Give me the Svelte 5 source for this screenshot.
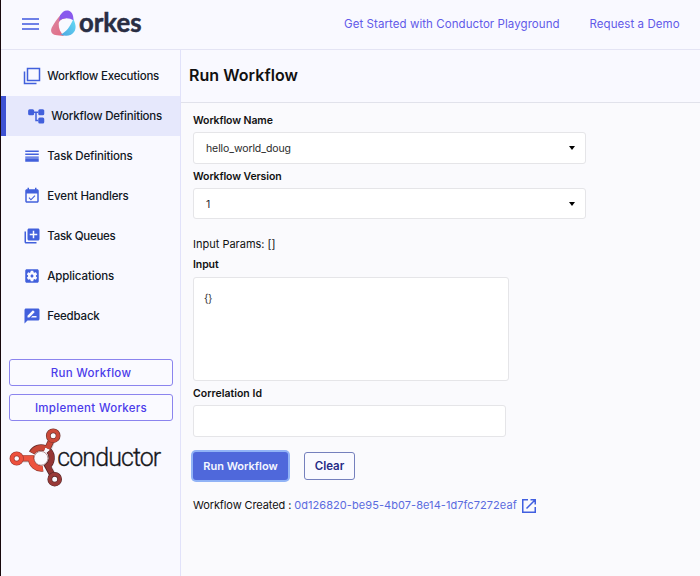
<script>
  const nav = [
    { icon: 'copy', label: 'Workflow Executions', width: 112 },
    { icon: 'tree', label: 'Workflow Definitions', active: true, width: 111 },
    { icon: 'rows', label: 'Task Definitions', width: 85.5 },
    { icon: 'event', label: 'Event Handlers', width: 81.5 },
    { icon: 'queue', label: 'Task Queues', width: 68.5 },
    { icon: 'apps', label: 'Applications', width: 67 },
    { icon: 'feedback', label: 'Feedback', width: 52.5 }
  ];
  const paths = {
    rows: 'M3 4.700h18v2H3zM3 8.700h18v2H3zM3 12.500h18v1.700H3zM3 15h18v4.500H3z',
    event: 'M16.53 12.06L15.47 11l-4.88 4.88-2.12-2.12-1.06 1.06L10.59 18l5.94-5.94zM19 3h-1V1h-2v2H8V1H6v2H5c-1.11 0-2 .9-2 2v14c0 1.1.89 2 2 2h14c1.1 0 2-.9 2-2V5c0-1.1-.9-2-2-2zm0 16H5V8.500h14v10.500z',
    queue: 'M4 6H2v14c0 1.1.9 2 2 2h14v-2H4V6zm16-4H8c-1.1 0-2 .9-2 2v12c0 1.1.9 2 2 2h12c1.1 0 2-.9 2-2V4c0-1.1-.9-2-2-2zm-1 9h-4v4h-2v-4H9V9h4V5h2v4h4v2z',
    apps: 'M12 10c-1.1 0-2 .9-2 2s.9 2 2 2 2-.9 2-2-.9-2-2-2zm7-7H5c-1.11 0-2 .9-2 2v14c0 1.1.89 2 2 2h14c1.11 0 2-.9 2-2V5c0-1.1-.89-2-2-2zm-1.75 9c0 .23-.02.46-.05.68l1.48 1.16c.13.11.17.3.08.45l-1.4 2.42c-.09.15-.27.21-.43.15l-1.74-.7c-.36.28-.76.51-1.18.69l-.26 1.85c-.03.17-.18.3-.35.3h-2.8c-.17 0-.32-.13-.35-.29l-.26-1.85c-.43-.18-.82-.41-1.18-.69l-1.74.7c-.16.06-.34 0-.43-.15l-1.4-2.42c-.09-.15-.05-.34.08-.45l1.48-1.16c-.03-.23-.05-.46-.05-.69 0-.23.02-.46.05-.68l-1.48-1.16c-.13-.11-.17-.3-.08-.45l1.4-2.42c.09-.15.27-.21.43-.15l1.74.7c.36-.28.76-.51 1.18-.69l.26-1.85c.03-.17.18-.3.35-.3h2.8c.17 0 .32.13.35.29l.26 1.85c.43.18.82.41 1.18.69l1.74-.7c.16-.06.34 0 .43.15l1.4 2.42c.09.15.05.34-.08.45l-1.48 1.16c.03.23.05.46.05.69z',
    feedback: 'M20 2H4c-1.1 0-1.99.9-1.99 2L2 22l4-4h14c1.1 0 2-.9 2-2V4c0-1.1-.9-2-2-2zM6 14v-2.47l6.88-6.88c.2-.2.51-.2.71 0l1.77 1.77c.2.2.2.51 0 .71L8.47 14H6zm12 0h-7.5l2-2H18v2z'
  };
  let version = $state('1');
  let params = $state('{}');
  let correlation = $state('');
</script>

<div class="page">
  <header>
    <svg class="menu" width="17" height="12" viewBox="0 0 17 12"><path d="M0 1h17M0 6h17M0 11h17" /></svg>
    <svg class="brand" width="98" height="42" viewBox="0 -5 98 42">
      <defs>
        <linearGradient id="pink" x1="0" y1="0" x2="1" y2="1"><stop offset="0" stop-color="#d989a6" /><stop offset="1" stop-color="#e5687e" /></linearGradient>
        <linearGradient id="cyan" x1="1" y1="0" x2="0" y2="1"><stop offset="0" stop-color="#65dcf5" /><stop offset="1" stop-color="#4ba5e0" /></linearGradient>
      </defs>
      <path d="M10 7.500C6.500 11 3 16.500 .8 20.500C-1.500 25.500 2 28 6 28.300L13 29C9.500 25.500 7.500 21.500 7.700 17C8 13 12 11.500 15 11.300Z" fill="url(#pink)" />
      <path d="M9 8.500C11.500 4.500 14.500 2.500 18.500 4C22 5.500 22.300 10 22.700 13.500C18 10.500 12 10.500 8 14Z" fill="#8959ed" />
      <path d="M22.400 12C24.500 17 25.500 20 23.700 24C20.500 29 15 30 9.500 27.500C15.500 25 19 19.500 22.400 12Z" fill="url(#cyan)" />
      <text x="28" y="24.500" textLength="62.500" lengthAdjust="spacingAndGlyphs">orkes</text>
    </svg>
    <nav class="top-links">
      <a href="#playground" class="playground">Get Started with Conductor Playground</a>
      <a href="#demo" class="demo">Request a Demo</a>
    </nav>
  </header>

  <div class="body">
    <aside>
      <ul>
        {#each nav as item}
          <li class:active={item.active}>
            <svg class="icon" width="18" height="18" viewBox="0 0 24 24">
              {#if item.icon === 'copy'}
                <path class="outline" d="M6 2h16v16H6zM2 6v16h16" />
              {:else if item.icon === 'tree'}
                <path class="outline" d="M9 7h6M12 7v11h3" />
                <rect x="1.500" y="3" width="8" height="8" rx="2" /><rect x="15" y="3" width="8" height="8" rx="2" /><rect x="15" y="14" width="8" height="8" rx="2" />
              {:else}
                <path d={paths[item.icon]} />
              {/if}
            </svg>
            <svg class="nav-text" width={item.width + 2} height="20"><text x="0.300" y="14" textLength={item.width}>{item.label}</text></svg>
          </li>
        {/each}
      </ul>
      <div class="side-actions">
        <button class="side-run">Run Workflow</button>
        <button>Implement Workers</button>
      </div>
      <svg class="conductor" width="166" height="64" viewBox="8 426 166 64">
        <path class="shadow" d="M17 458.500H32M53 435.500L48 448M55 479.500L48 466" />
        <g stroke="#6d2f2b">
          <path d="M31.800 453A10.500 10.500 0 0 1 45 448.300" stroke-width="6.400" />
          <path d="M53 437L47.500 448.500" stroke-width="6.400" />
        </g>
        <path d="M32.200 452.800A10.500 10.500 0 0 1 45 448.300M53 437L47.500 448.500" stroke="#c94737" stroke-width="5.200" />
        <path d="M49 450.800A10.500 10.500 0 0 1 47.500 466.200L54 478" stroke="#4e2426" stroke-width="6.200" />
        <path d="M49.300 451.200A10.500 10.500 0 0 1 47.800 466L54 478" stroke="#943634" stroke-width="5" />
        <path d="M18 458.300H31A10.300 10.300 0 0 0 43 468.500" stroke="#963a2f" stroke-width="6.200" />
        <path d="M18 458.300H31A10.300 10.300 0 0 0 42.700 468.400" stroke="#ed543f" stroke-width="5" />
        <circle cx="41" cy="458.300" r="6.900" fill="#fafaff" stroke="#864844" stroke-width=".6" />
        <circle cx="53.200" cy="435.700" r="4.900" fill="#fafaff" stroke="#6b332e" stroke-width="4.800" />
        <circle cx="53.200" cy="435.700" r="4.900" stroke="#cb4939" stroke-width="3.600" />
        <circle cx="16.700" cy="458.500" r="4.700" fill="#fafaff" stroke="#9b3830" stroke-width="4.800" />
        <circle cx="16.700" cy="458.500" r="4.700" stroke="#ed503d" stroke-width="3.600" />
        <circle cx="54.700" cy="479.200" r="4.900" fill="#fafaff" stroke="#532829" stroke-width="4.800" />
        <circle cx="54.700" cy="479.200" r="4.900" stroke="#993a38" stroke-width="3.600" />
        <text x="57.300" y="465.500" textLength="104" lengthAdjust="spacing">conductor</text>
      </svg>
    </aside>

    <main>
      <div class="title"><h1>Run Workflow</h1></div>
      <form onsubmit={(e) => e.preventDefault()}>
        <span class="label">Workflow Name</span>
        <div class="select name"><span>hello_world_doug</span><i></i></div>
        <span class="label second">Workflow Version</span>
        <div class="select version"><span>{version}</span><i></i></div>
        <p class="params">Input Params: []</p>
        <label class="label" for="input">Input</label>
        <textarea id="input" bind:value={params}></textarea>
        <label class="label corr-label" for="correlation">Correlation Id</label>
        <input id="correlation" bind:value={correlation} />
        <div class="actions">
          <button class="run">Run Workflow</button>
          <button class="clear" type="button">Clear</button>
        </div>
        <p class="created">
          <span class="caption">Workflow Created :</span>
          <a href="#execution">0d126820-be95-4b07-8e14-1d7fc7272eaf</a>
          <svg width="14" height="14" viewBox="0 0 14 14"><path d="M6 .75H.75v12.500h12.500V8M8.500 .75h4.750V5.500M13 1L4.500 9.500" /></svg>
        </p>
      </form>
    </main>
  </div>
</div>

<style>
  :global(body) { margin: 0; }
  .page {
    box-sizing: border-box;
    width: 700px;
    height: 576px;
    display: flex;
    flex-direction: column;
    border-left: 1px solid #17080c;
    background: #fafafd;
    color: #111;
    font-family: Inter, "Liberation Sans", sans-serif;
    overflow: hidden;
  }
  header {
    box-sizing: border-box;
    height: 50px;
    display: flex;
    align-items: flex-start;
    background: #f9f9ff;
    border-bottom: 1px solid #e4e4f4;
  }
  .menu { flex: none; margin: 18px 0 0 21px; stroke: #4058df; stroke-width: 1.5; }
  .brand { flex: none; margin: 2px 0 0 11.500px; overflow: visible; }
  .brand text { font: 700 27px Lato, sans-serif; fill: #292d43; stroke: #292d43; stroke-width: .5; }
  .top-links {
    display: flex;
    margin: 16px 0 0 195.500px;
    font-size: 11.5px;
    line-height: 16px;
    white-space: nowrap;
  }
  a { color: #6259e9; text-decoration: none; }
  .playground { width: 245.5px; letter-spacing: .07px; }
  .demo { letter-spacing: .07px; }
  .body { display: flex; flex: 1; min-height: 0; }
  aside {
    box-sizing: border-box;
    width: 180px;
    flex: none;
    padding-top: 6px;
    background: #f9f9ff;
    border-right: 1px solid #e1e2fa;
  }
  ul { list-style: none; margin: 0; padding: 0; }
  li { box-sizing: border-box; height: 40px; display: flex; align-items: center; padding-left: 22px; }
  li.active { background: #e6e8fc; border-left: 5px solid #3d51d2; padding-left: 21px; }
  .icon { flex: none; fill: #4260dc; }
  .outline { fill: none; stroke: #4260dc; stroke-width: 2; }
  .nav-text { margin-left: 6px; overflow: visible; }
  .nav-text text { font-size: 11.5px; font-weight: 500; fill: #111724; }
  button { box-sizing: border-box; font-family: inherit; padding: 0; }
  .side-actions { display: flex; flex-direction: column; gap: 8px; padding: 23px 7px 0 8px; }
  .side-actions button {
    height: 27px;
    border: 1px solid #8b84ee;
    border-radius: 3px;
    background: #fafaff;
    color: #4b3bea;
    font-size: 11.5px;
    font-weight: 500;
    letter-spacing: .3px;
  }
  .conductor { display: block; margin: 5px 0 0 7px; fill: none; overflow: visible; }
  .conductor text { font: 300 25px Roboto, sans-serif; fill: #17171b; stroke: #17171b; stroke-width: .3; }
  .shadow { stroke: #777; stroke-width: 6; opacity: .25; transform: translate(1px, 1px); }
  main { flex: 1; min-width: 0; }
  .title {
    box-sizing: border-box;
    height: 53px;
    padding: 15px 0 0 8px;
    background: #f9f9ff;
    border-bottom: 1px solid #e1e2eb;
  }
  h1 { margin: 0; font-size: 16px; line-height: 21px; font-weight: 600; letter-spacing: .05px; }
  form { display: flex; flex-direction: column; align-items: flex-start; padding: 9.500px 0 0 12px; }
  .label { font-size: 10.5px; line-height: 16px; font-weight: 600; letter-spacing: -.1px; }
  .select {
    box-sizing: border-box;
    width: 393px;
    height: 32px;
    display: flex;
    align-items: center;
    justify-content: space-between;
    padding: 0 10.500px 0 12px;
    margin-top: 3.500px;
    background: #fff;
    border: 1px solid #e5e5e8;
    border-radius: 3px;
    font-size: 10.5px;
    letter-spacing: -.1px;
    color: #2b2b2b;
  }
  .select.version { height: 31px; margin-top: 3px; padding-top: 1px; }
  .select i { border: 3.5px solid transparent; border-top: 4px solid #000; border-bottom: 0; }
  .second { margin-top: 5px; }
  .params { margin: 16.500px 0 5.500px; font-size: 11px; line-height: 16px; }
  textarea, input {
    box-sizing: border-box;
    background: #fff;
    border: 1px solid #e5e5e8;
    border-radius: 3px;
    font-family: inherit;
    font-size: 10.5px;
    color: #333;
    outline: 0;
  }
  textarea { width: 316px; height: 104px; margin: 3.500px 0 5.500px; padding: 13px 10px; line-height: 16px; resize: none; letter-spacing: -.4px; }
  input { width: 313px; height: 32px; margin-top: 2.500px; padding: 0 10px; }
  .corr-label { letter-spacing: .02px; }
  .actions { display: flex; gap: 16px; margin-top: 15.500px; }
  .actions button { height: 28px; border-radius: 3px; font-size: 11.5px; font-weight: 600; }
  .actions .run { width: 95px; border: 0; background: #4f68db; color: #f5f7ff; box-shadow: 0 0 0 2px #91b3f6; font-size: 11px; }
  .actions .clear { width: 51px; border: 1px solid #7580bd; background: #fafaff; color: #262b86; }
  .created { display: flex; align-items: center; margin: 17px 0 0; font-size: 11px; line-height: 16px; white-space: nowrap; }
  .caption { letter-spacing: -.1px; }
  .created a { margin-left: 3px; color: #5a6bdf; letter-spacing: .06px; }
  .created svg { margin: 1px 0 0 5.500px; fill: none; stroke: #415fe0; stroke-width: 1.5; }
</style>
